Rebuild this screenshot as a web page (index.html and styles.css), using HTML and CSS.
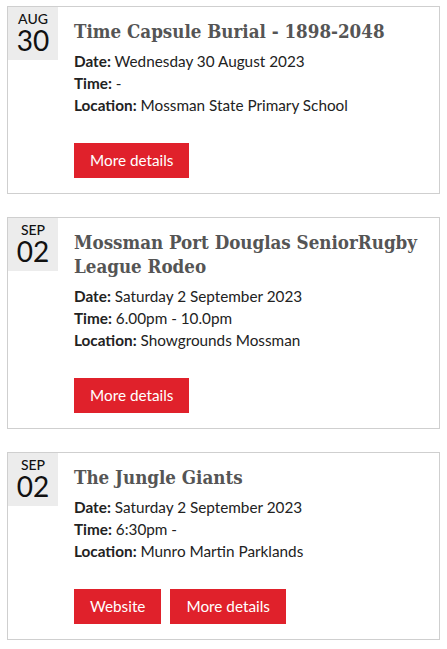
FILE: index.html
```html
<!DOCTYPE html>
<html lang="en">
<head>
<meta charset="utf-8">
<title>Events</title>
<link rel="stylesheet" href="styles.css">
</head>
<body>
<div class="list">
  <article class="card">
    <div class="datebox"><span class="month">AUG</span><span class="day">30</span></div>
    <div class="content">
      <h2 class="title">Time Capsule Burial - 1898-2048</h2>
      <div class="meta">
        <p><b>Date:</b> Wednesday 30 August 2023</p>
        <p><b>Time:</b> -</p>
        <p><b>Location:</b> Mossman State Primary School</p>
      </div>
      <div class="actions"><a class="btn" href="#">More details</a></div>
    </div>
  </article>
  <article class="card">
    <div class="datebox"><span class="month">SEP</span><span class="day">02</span></div>
    <div class="content">
      <h2 class="title">Mossman Port Douglas SeniorRugby League Rodeo</h2>
      <div class="meta">
        <p><b>Date:</b> Saturday 2 September 2023</p>
        <p><b>Time:</b> 6.00pm - 10.0pm</p>
        <p><b>Location:</b> Showgrounds Mossman</p>
      </div>
      <div class="actions"><a class="btn" href="#">More details</a></div>
    </div>
  </article>
  <article class="card">
    <div class="datebox"><span class="month">SEP</span><span class="day">02</span></div>
    <div class="content">
      <h2 class="title">The Jungle Giants</h2>
      <div class="meta">
        <p><b>Date:</b> Saturday 2 September 2023</p>
        <p><b>Time:</b> 6:30pm -</p>
        <p><b>Location:</b> Munro Martin Parklands</p>
      </div>
      <div class="actions"><a class="btn" href="#">Website</a><a class="btn" href="#">More details</a></div>
    </div>
  </article>
</div>
</body>
</html>
```

FILE: styles.css
```css
html, body {
  margin: 0;
  padding: 0;
  background: #fff;
}
body {
  font-family: Lato, "Liberation Sans", sans-serif;
  color: #222;
}
.list {
  padding: 6px 7px 0 7px;
  display: flex;
  flex-direction: column;
  gap: 23px;
}
.card {
  border: 1px solid #cfcfcf;
  display: flex;
  align-items: flex-start;
}
.datebox {
  flex: none;
  width: 50px;
  height: 53px;
  background: #ececec;
  display: flex;
  flex-direction: column;
  align-items: center;
  padding-top: 5px;
  box-sizing: border-box;
  color: #111;
}
.month {
  font-size: 14px;
  line-height: 14px;
  font-weight: 500;
}
.day {
  font-size: 28px;
  line-height: 28px;
}
.content {
  flex: 1;
  padding: 13px 8px 15px 16px;
}
.title {
  margin: 0;
  font-family: "DejaVu Serif Condensed", "DejaVu Serif", "Liberation Serif", serif;
  font-stretch: condensed;
  font-weight: bold;
  font-size: 18.6px;
  line-height: 24px;
  color: #555;
}
.meta {
  margin-top: 6px;
}
.meta p {
  margin: 0;
  font-size: 15.3px;
  line-height: 22px;
}
.meta b {
  font-weight: bold;
}
.actions {
  margin-top: 27px;
  display: flex;
  gap: 9px;
}
.btn {
  display: inline-block;
  background: #e0212b;
  color: #fff;
  text-decoration: none;
  font-size: 15.3px;
  line-height: 35px;
  height: 35px;
  padding: 0 16px;
}
```
